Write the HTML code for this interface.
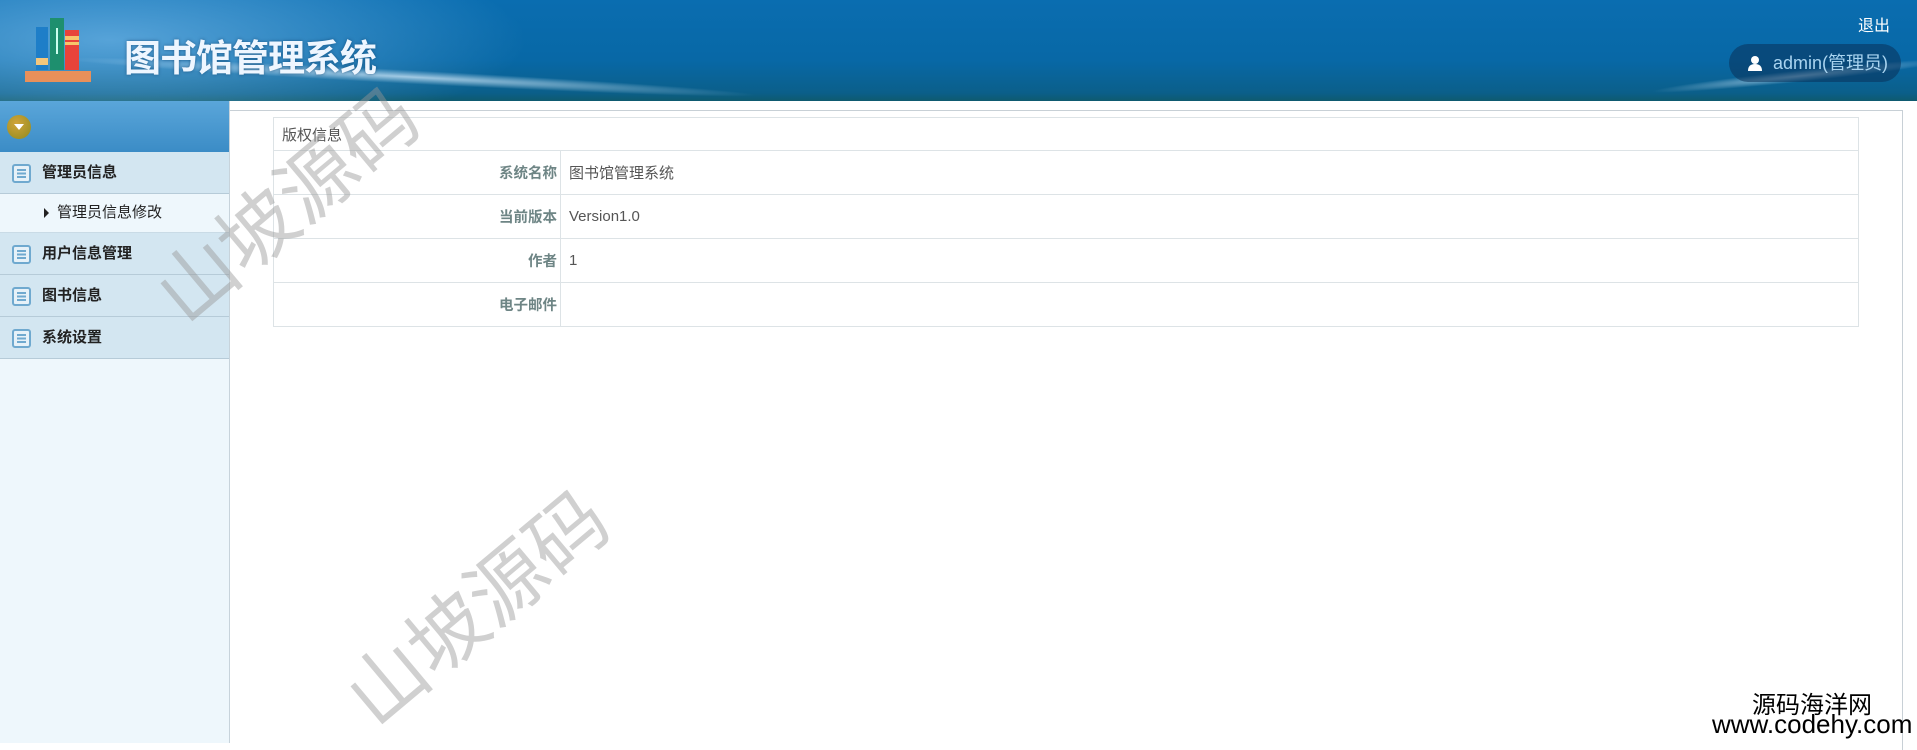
<!DOCTYPE html>
<html><head><meta charset="utf-8"><style>
*{margin:0;padding:0;box-sizing:border-box}
body{width:1917px;height:743px;overflow:hidden;background:#fff;font-family:"Liberation Sans","Noto Sans CJK SC",sans-serif;position:relative}
.hdr{position:absolute;left:0;top:0;width:1917px;height:101px;background:linear-gradient(180deg,#0a6db0 0%,#0868a6 60%,#0b5f8a 92%,#0e5a6e 100%);overflow:hidden}
.hdr .glow{position:absolute;left:-100px;top:-40px;width:700px;height:200px;background:radial-gradient(ellipse at 30% 40%,rgba(150,210,255,.55),rgba(60,140,200,0) 60%)}
.hdr .streak{position:absolute;left:60px;top:70px;width:700px;height:14px;border-radius:50%;background:radial-gradient(ellipse,rgba(220,240,255,.7),rgba(255,255,255,0) 70%);transform:rotate(3deg)}
.hdr .streak2{position:absolute;left:1650px;top:70px;width:300px;height:12px;border-radius:50%;background:radial-gradient(ellipse,rgba(220,240,255,.6),rgba(255,255,255,0) 70%);transform:rotate(-6deg)}
.title{position:absolute;left:124px;top:28px;font-size:37px;font-weight:bold;color:#eef6ff;letter-spacing:-1px;text-shadow:0 0 3px rgba(0,40,80,.5)}
.logout{position:absolute;right:27px;top:12px;color:#fff;font-size:16px}
.user{position:absolute;left:1729px;top:44px;width:172px;height:38px;border-radius:19px;background:rgba(10,50,90,.55);color:#a9d4f0;font-size:18px;line-height:38px;padding-left:44px}
.user svg{position:absolute;left:18px;top:11px}
.side{position:absolute;left:0;top:101px;width:230px;height:642px;background:#eef7fc;border-right:1px solid #c7d3db}
.strip{height:51px;background:linear-gradient(180deg,#5aa6da,#3b8cc6);position:relative}
.strip .c{position:absolute;left:7px;top:14px;width:24px;height:24px;border-radius:50%;background:radial-gradient(circle at 40% 35%,#d1a43a,#8f8a1e)}
.strip .c:after{content:"";position:absolute;left:7px;top:9px;border-left:5px solid transparent;border-right:5px solid transparent;border-top:6px solid #fff}
.mi{height:42px;background:#d3e6f1;border-bottom:1px solid #b6cbd8;font-size:15px;font-weight:bold;color:#222;line-height:42px;padding-left:42px;position:relative}
.mi i{position:absolute;left:12px;top:12px;width:19px;height:19px;border:2px solid #6fa9cf;border-radius:3px;background:#e6f1f8}
.mi i:before{content:"";position:absolute;left:3px;top:3px;width:9px;height:9px;background:repeating-linear-gradient(180deg,#6fa9cf 0 2px,transparent 2px 3.5px)}
.sub{height:39px;background:#eef7fc;border-bottom:1px solid #c9dbe6;font-size:15px;color:#222;line-height:38px;padding-left:57px;position:relative}
.sub:before{content:"";position:absolute;left:44px;top:14px;border-top:5px solid transparent;border-bottom:5px solid transparent;border-left:5px solid #222}
.panel{position:absolute;left:230px;top:110px;width:1673px;height:640px;border:1px solid #c8d0d6;border-left:none;border-bottom:none}
table{position:absolute;left:273px;top:117px;width:1586px;border-collapse:collapse;font-size:15px}
td{border:1px solid #dde3e6;height:44px;padding:0 8px}
td.l{width:287px;text-align:right;font-weight:bold;color:#6e8585;font-size:14.5px;padding-right:3px}
td.v{color:#555}
tr.h td{height:33px;color:#555;font-size:15px;padding-left:8px}
.wm{position:absolute;font-size:78px;color:rgba(150,150,150,.45);transform:rotate(-40deg);transform-origin:center;white-space:nowrap;font-family:"Noto Sans CJK SC",sans-serif;font-weight:400}
.cr{position:absolute;color:#000;text-align:center;line-height:1}
</style></head><body>
<div class="hdr"><div class="glow"></div><div class="streak"></div><div class="streak2"></div>
<svg style="position:absolute;left:24px;top:16px" width="70" height="70" viewBox="0 0 70 70">
<rect x="12" y="11" width="12" height="43" fill="#1e7ec8"/><rect x="12" y="42" width="12" height="7" fill="#f4c77c"/>
<rect x="26" y="2" width="14" height="52" fill="#1e8f6e"/><rect x="32" y="12" width="2" height="26" fill="#cfe"/>
<rect x="41" y="14" width="14" height="40" fill="#e8433a"/><rect x="41" y="20" width="14" height="4" fill="#f7c46b"/><rect x="41" y="26" width="14" height="3" fill="#f7c46b"/>
<rect x="1" y="55" width="66" height="11" fill="#e8905a"/></svg>
<div class="title">图书馆管理系统</div>
<div class="logout">退出</div>
<div class="user"><svg width="16" height="16" viewBox="0 0 16 16"><circle cx="8" cy="5" r="4" fill="#fff"/><path d="M1 16 Q1 9 8 9 Q15 9 15 16Z" fill="#fff"/></svg>admin(管理员)</div>
</div>
<div class="side"><div class="strip"><div class="c"></div></div>
<div class="mi"><i></i>管理员信息</div>
<div class="sub">管理员信息修改</div>
<div class="mi"><i></i>用户信息管理</div>
<div class="mi"><i></i>图书信息</div>
<div class="mi"><i></i>系统设置</div>
</div>
<div class="panel"></div>
<table>
<tr class="h"><td colspan="2">版权信息</td></tr>
<tr><td class="l">系统名称</td><td class="v">图书馆管理系统</td></tr>
<tr><td class="l">当前版本</td><td class="v">Version1.0</td></tr>
<tr><td class="l">作者</td><td class="v">1</td></tr>
<tr><td class="l">电子邮件</td><td class="v"></td></tr>
</table>
<div class="wm" style="left:128px;top:145px">山坡源码</div>
<div class="wm" style="left:318px;top:548px">山坡源码</div>
<div class="cr" style="left:1752px;top:691px;font-size:24px;font-family:'Noto Sans CJK SC',sans-serif">源码海洋网</div>
<div class="cr" style="left:1712px;top:711px;font-size:26px">www.codehy.com</div>
</body></html>
